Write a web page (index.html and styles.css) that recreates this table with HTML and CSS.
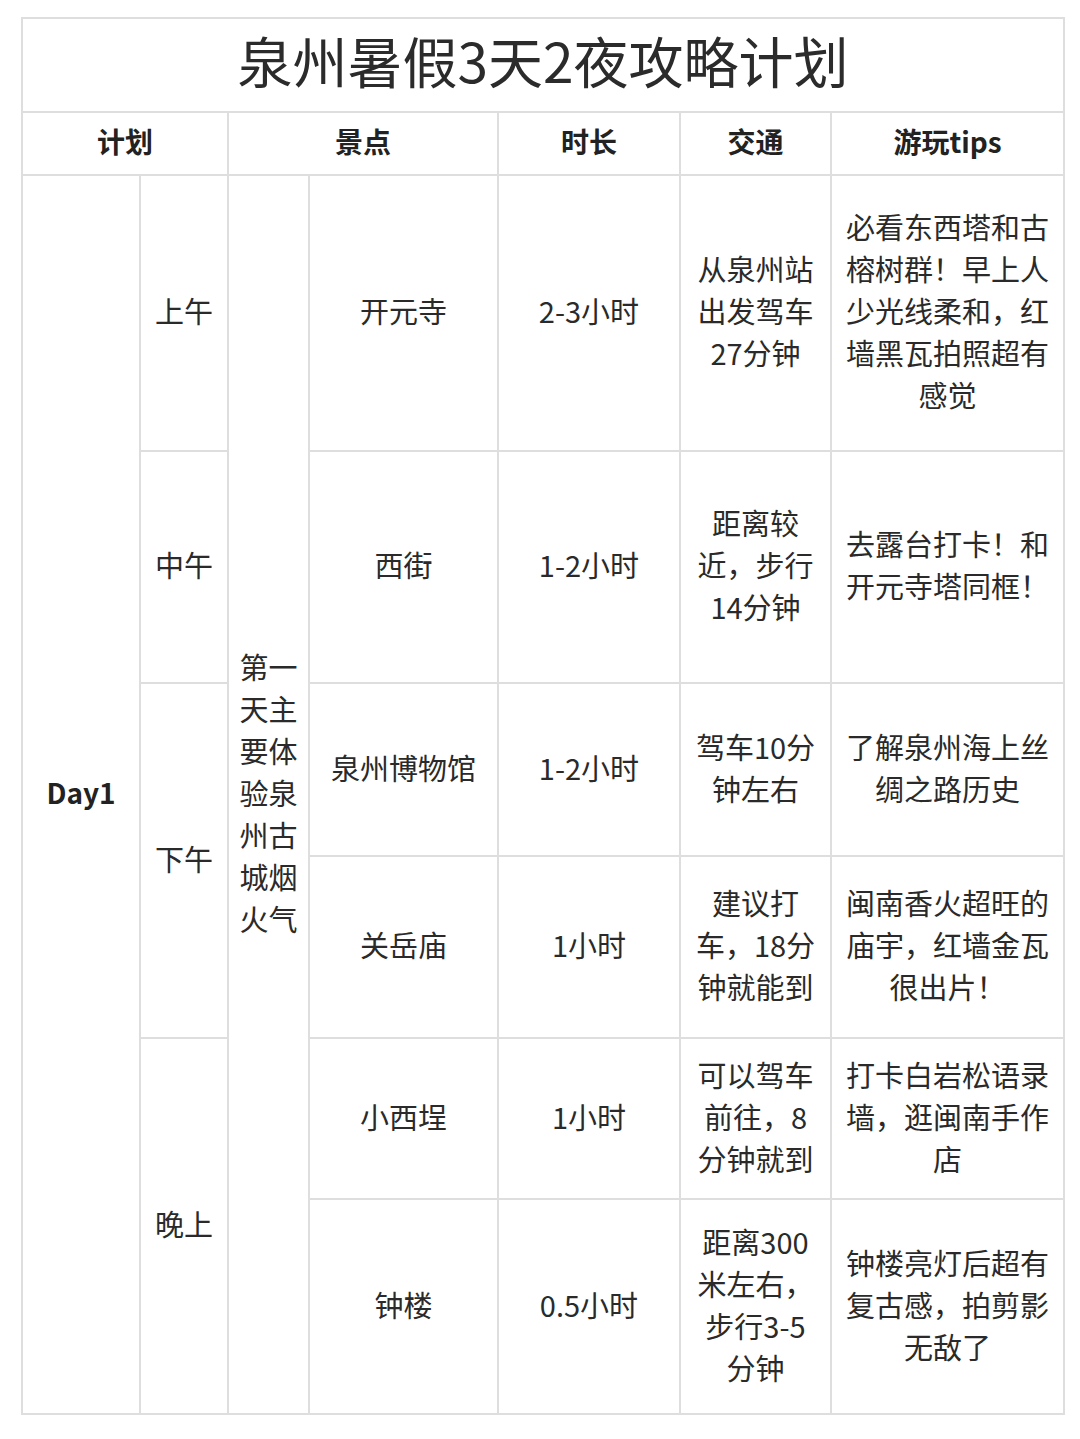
FILE: index.html
```html
<!DOCTYPE html>
<html lang="zh-CN">
<head>
<meta charset="utf-8">
<title>泉州暑假3天2夜攻略计划</title>
<link rel="stylesheet" href="styles.css">
</head>
<body>
<table class="plan">
  <colgroup>
    <col class="c-day"><col class="c-period"><col class="c-theme"><col class="c-spot"><col class="c-dur"><col class="c-trans"><col class="c-tips">
  </colgroup>
  <tr class="r-title"><td colspan="7" class="title">泉州暑假3天2夜攻略计划</td></tr>
  <tr class="r-head">
    <th colspan="2">计划</th>
    <th colspan="2">景点</th>
    <th>时长</th>
    <th>交通</th>
    <th>游玩tips</th>
  </tr>
  <tr class="r1">
    <td rowspan="6" class="day">Day1</td>
    <td class="period">上午</td>
    <td rowspan="6" class="theme">第一天主要体验泉州古城烟火气</td>
    <td>开元寺</td>
    <td>2-3小时</td>
    <td class="trans">从泉州站出发驾车27分钟</td>
    <td class="tips">必看东西塔和古榕树群！早上人少光线柔和，红墙黑瓦拍照超有感觉</td>
  </tr>
  <tr class="r2">
    <td class="period">中午</td>
    <td>西街</td>
    <td>1-2小时</td>
    <td class="trans">距离较近，步行14分钟</td>
    <td class="tips">去露台打卡！和开元寺塔同框！</td>
  </tr>
  <tr class="r3">
    <td rowspan="2" class="period">下午</td>
    <td>泉州博物馆</td>
    <td>1-2小时</td>
    <td class="trans">驾车10分钟左右</td>
    <td class="tips">了解泉州海上丝绸之路历史</td>
  </tr>
  <tr class="r4">
    <td>关岳庙</td>
    <td>1小时</td>
    <td class="trans">建议打车，18分钟就能到</td>
    <td class="tips">闽南香火超旺的庙宇，红墙金瓦很出片！</td>
  </tr>
  <tr class="r5">
    <td rowspan="2" class="period">晚上</td>
    <td>小西埕</td>
    <td>1小时</td>
    <td class="trans">可以驾车前往，8分钟就到</td>
    <td class="tips">打卡白岩松语录墙，逛闽南手作店</td>
  </tr>
  <tr class="r6">
    <td>钟楼</td>
    <td>0.5小时</td>
    <td class="trans">距离300米左右，步行3-5分钟</td>
    <td class="tips">钟楼亮灯后超有复古感，拍剪影无敌了</td>
  </tr>
</table>
</body>
</html>
```

FILE: styles.css
```css
html, body {
  margin: 0;
  padding: 0;
  background: #ffffff;
}

body {
  font-family: "Noto Sans CJK SC", "Noto Sans", sans-serif;
  color: #2a2a2a;
  padding: 17px 0 0 21px;
}

.plan {
  border-collapse: collapse;
  table-layout: fixed;
  width: 1042px;
}

.plan td, .plan th {
  border: 2px solid #dedede;
  text-align: center;
  vertical-align: middle;
  font-size: 29px;
  line-height: 42px;
  padding: 0 8px 6px;
  font-weight: 400;
  word-break: normal;
}

.c-day { width: 118px; }
.c-period { width: 88px; }
.c-theme { width: 81px; }
.c-spot { width: 189px; }
.c-dur { width: 182px; }
.c-trans { width: 151px; }
.c-tips { width: 233px; }

.r-title { height: 94px; }
.r-head { height: 63px; }
.r1 { height: 276px; }
.r2 { height: 232px; }
.r3 { height: 173px; }
.r4 { height: 182px; }
.r5 { height: 161px; }
.r6 { height: 215px; }

.plan .title {
  font-size: 55px;
  line-height: 64px;
  color: #2b2b2b;
  padding-bottom: 12px;
}

.plan th {
  font-size: 28px;
  font-weight: 700;
  color: #222;
}

.plan .day {
  font-weight: 700;
  font-size: 28px;
  color: #222;
}

.plan .theme {
  padding: 0 10px 6px;
}

.plan .trans {
  padding: 0 13px 6px;
}

.plan .tips {
  padding: 0 11px 6px;
}
```
